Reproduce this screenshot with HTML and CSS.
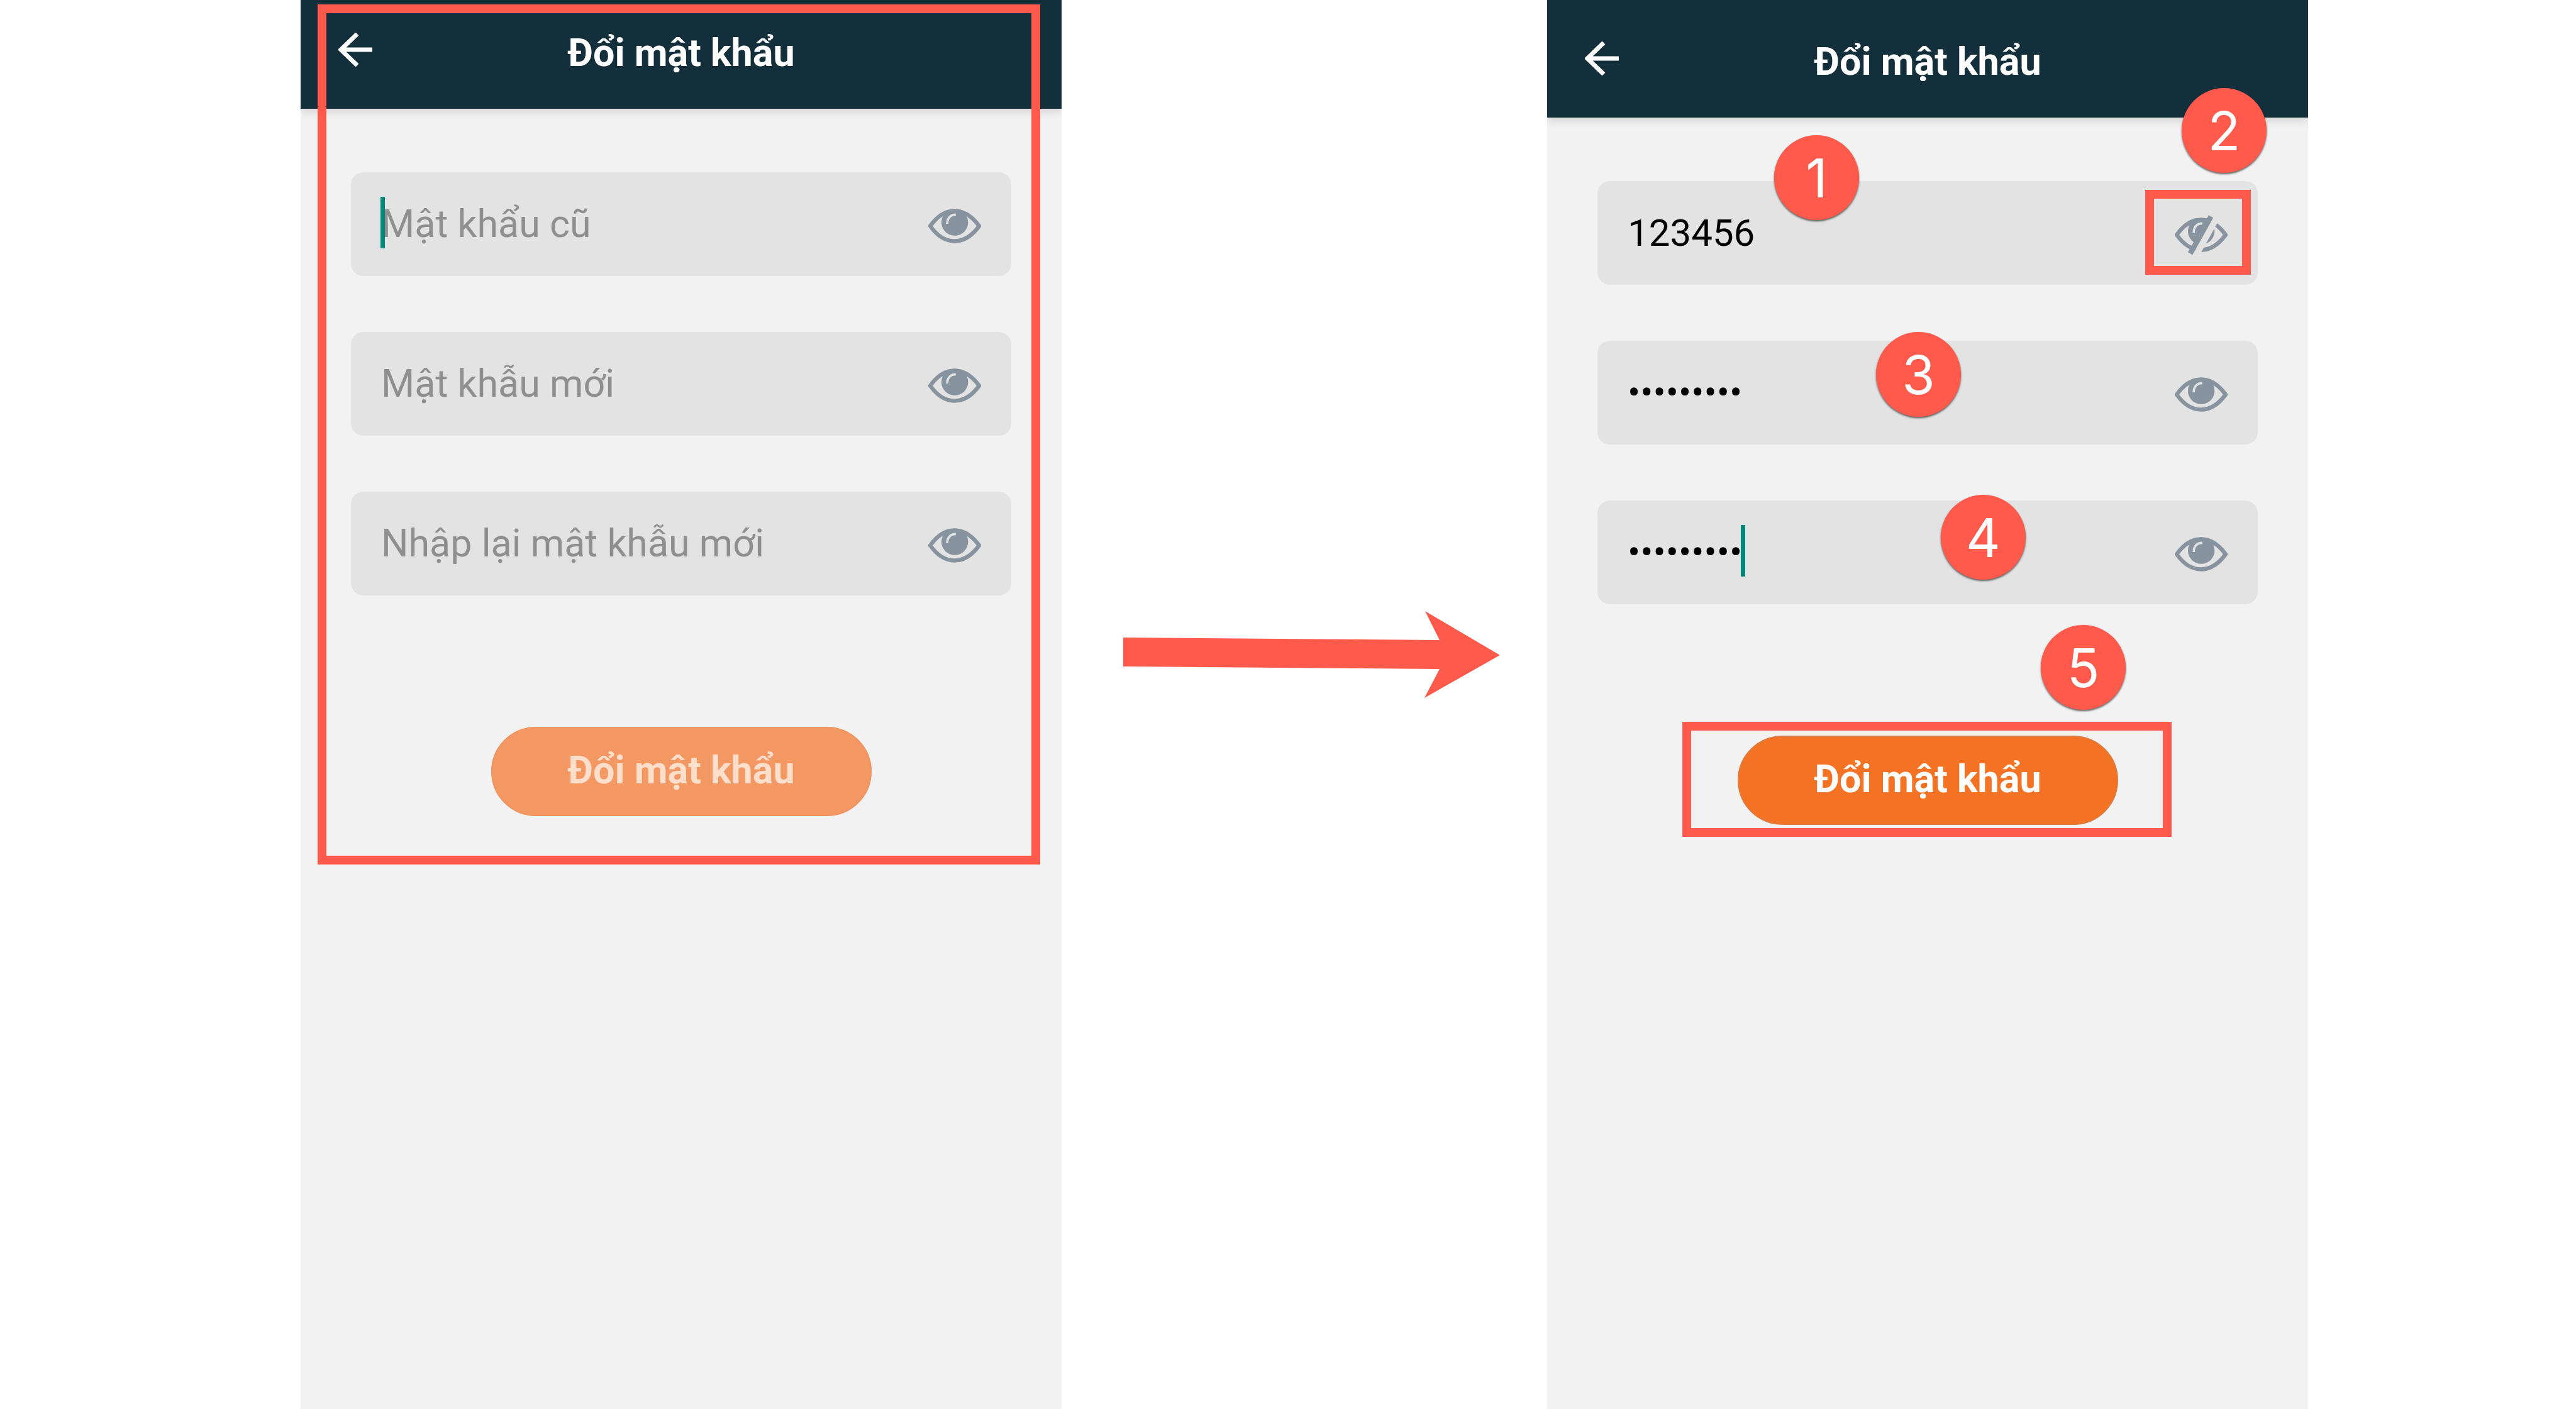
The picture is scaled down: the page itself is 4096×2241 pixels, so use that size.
FILE: index.html
```html
<!DOCTYPE html>
<html lang="vi">
<head>
<meta charset="utf-8">
<meta name="viewport" content="width=device-width, initial-scale=1">
<title>Đổi mật khẩu</title>
<link rel="stylesheet" href="styles.css">
</head>
<body>
<svg class="sprite" width="0" height="0" aria-hidden="true">
  <symbol id="back" viewBox="0 0 54 54">
    <path d="M30 2 4 27l26 25M4 27h50" fill="none" stroke="currentColor" stroke-width="7"/>
  </symbol>
  <symbol id="eye" viewBox="0 0 301 226">
    <path d="M11 113C50 58 96 27 150 27s100 31 140 86c-40 55-86 86-140 86S50 168 11 113Z" fill="none" stroke="currentColor" stroke-width="23" stroke-linejoin="round"/>
    <circle cx="151" cy="92" r="76" fill="currentColor"/>
    <path class="glint" d="M157 48c-30 0-49 20-49 52" fill="none" stroke-width="13"/>
  </symbol>
  <symbol id="eye-off" viewBox="0 0 301 226">
    <path d="M11 113C50 58 96 27 150 27s100 31 140 86c-40 55-86 86-140 86S50 168 11 113Z" fill="none" stroke="currentColor" stroke-width="23" stroke-linejoin="round"/>
    <circle cx="151" cy="92" r="76" fill="currentColor"/>
    <path class="glint" d="M157 48c-30 0-49 20-49 52" fill="none" stroke-width="13"/>
    <path class="glint" d="M254-12 116 238" fill="none" stroke-width="36"/>
    <path d="M206 8 88 220" fill="none" stroke="currentColor" stroke-width="30"/>
  </symbol>
</svg>

<main class="guide">
  <section class="phone phone-before">
    <header class="bar">
      <a class="back" href="#" aria-label="Quay lại"><svg><use href="#back"/></svg></a>
      <h1 class="title">Đổi mật khẩu</h1>
    </header>
    <form class="form">
      <div class="field">
        <input class="input" type="password" placeholder="Mật khẩu cũ" aria-label="Mật khẩu cũ">
        <span class="caret"></span>
        <button class="toggle" type="button" aria-label="Hiện mật khẩu"><svg><use href="#eye"/></svg></button>
      </div>
      <div class="field">
        <input class="input" type="password" placeholder="Mật khẫu mới" aria-label="Mật khẫu mới">
        <button class="toggle" type="button" aria-label="Hiện mật khẩu"><svg><use href="#eye"/></svg></button>
      </div>
      <div class="field">
        <input class="input" type="password" placeholder="Nhập lại mật khẫu mới" aria-label="Nhập lại mật khẫu mới">
        <button class="toggle" type="button" aria-label="Hiện mật khẩu"><svg><use href="#eye"/></svg></button>
      </div>
      <button class="submit" type="button" disabled>Đổi mật khẩu</button>
    </form>
    <div class="frame frame-screen"></div>
  </section>

  <div class="next">
    <svg class="arrow" viewBox="0 0 599 138" aria-hidden="true">
      <path d="M0 42 503 46 480 0 599 70 479 138 503 92 0 88Z" fill="currentColor"/>
    </svg>
  </div>

  <section class="phone phone-after">
    <header class="bar">
      <a class="back" href="#" aria-label="Quay lại"><svg><use href="#back"/></svg></a>
      <h2 class="title">Đổi mật khẩu</h2>
    </header>
    <form class="form">
      <div class="field">
        <input class="input" type="text" value="123456" aria-label="Mật khẩu cũ">
        <button class="toggle" type="button" aria-label="Ẩn mật khẩu"><svg><use href="#eye-off"/></svg></button>
      </div>
      <div class="field">
        <input class="input" type="password" value="123456789" aria-label="Mật khẫu mới">
        <button class="toggle" type="button" aria-label="Hiện mật khẩu"><svg><use href="#eye"/></svg></button>
      </div>
      <div class="field">
        <input class="input" type="password" value="123456789" aria-label="Nhập lại mật khẫu mới">
        <span class="caret caret-end"></span>
        <button class="toggle" type="button" aria-label="Hiện mật khẩu"><svg><use href="#eye"/></svg></button>
      </div>
      <button class="submit" type="button">Đổi mật khẩu</button>
    </form>
    <div class="frame frame-toggle"></div>
    <div class="frame frame-submit"></div>
    <span class="badge badge-1">1</span>
    <span class="badge badge-2">2</span>
    <span class="badge badge-3">3</span>
    <span class="badge badge-4">4</span>
    <span class="badge badge-5">5</span>
  </section>
</main>
</body>
</html>
```
FILE: styles.css
```css
:root {
  --red: #ff5a4b;
  --field: #e3e3e3;
}

* {
  box-sizing: border-box;
}

body {
  margin: 0;
  background: #fff;
  font-family: Roboto, "Liberation Sans", sans-serif;
  font-size: 60px;
  line-height: 70px;
}

.sprite {
  position: absolute;
}

/* Two screens side by side with the arrow between them */
.guide {
  display: grid;
  grid-template-columns: 1210fr 772fr 1210fr;
  min-height: 100vh;
  padding-left: calc(100% * 478 / 4096);
  padding-right: calc(100% * 426 / 4096);
}

.phone {
  position: relative;
  background: #f2f2f2;
}

.bar {
  display: grid;
  grid-template-columns: 54px 1fr 54px;
  align-items: center;
  padding: 49px 60px 54px;
  background: #122f3b;
  color: #fff;
  box-shadow: 0 4px 14px rgba(0, 0, 0, 0.14);
  clip-path: inset(0 0 -24px 0);
}

.phone-after .bar {
  padding-top: 63px;
}

.back {
  display: block;
  height: 54px;
  margin-bottom: 10px;
  color: inherit;
}

.back svg {
  display: block;
  width: 54px;
  height: 54px;
}

.title {
  margin: 0;
  font-size: 61px;
  font-weight: 700;
  text-align: center;
}

.form {
  display: flex;
  flex-direction: column;
  gap: 89px;
  padding: 101px 80px;
}

.field {
  position: relative;
  display: flex;
  align-items: center;
  height: 165px;
  padding: 0 48px;
  border-radius: 20px;
  background: var(--field);
}

.input {
  flex: 1;
  min-width: 0;
  height: 100%;
  padding: 0;
  border: 0;
  outline: 0;
  background: none;
  color: #000;
  font: inherit;
}

.input::placeholder {
  color: #8f8f8f;
  font-size: 61px;
  opacity: 1;
}

.caret {
  position: absolute;
  top: 39px;
  left: 47px;
  width: 7px;
  height: 82px;
  background: #00897b;
}

.caret-end {
  left: 228px;
}

.toggle {
  margin: 6px 0 0;
  padding: 0;
  border: 0;
  background: none;
  color: #87939f;
}

.toggle svg {
  display: block;
  width: 84px;
  height: 63px;
}

.glint {
  stroke: var(--field);
}

.submit {
  align-self: center;
  width: calc(50% + 80px);
  height: 142px;
  margin-top: 120px;
  padding: 0 0 4px;
  border: 2px solid #e07a3c;
  border-radius: 71px;
  background: #f47224;
  color: #fff;
  font: inherit;
  font-size: 61px;
  font-weight: 700;
}

.submit:disabled {
  border-color: #f0935e;
  background: #f49863;
  color: #ffdfcc;
}

.next {
  display: flex;
  align-items: center;
  padding: 0 75px 160px 98px;
  color: var(--red);
}

.arrow {
  width: 100%;
}

/* Call-outs laid over the screens */
.frame {
  position: absolute;
  border: 14px solid var(--red);
  pointer-events: none;
}

.frame-screen {
  top: 7px;
  left: 27px;
  right: 34px;
  height: 1368px;
}

.frame-toggle {
  top: 302px;
  right: 91px;
  width: 168px;
  height: 135px;
}

.frame-submit {
  top: 1148px;
  left: 215px;
  right: 217px;
  height: 183px;
}

.badge {
  position: absolute;
  width: 135px;
  height: 135px;
  padding-top: 4px;
  border-radius: 50%;
  background: var(--red);
  box-shadow: 0 2px 3px rgba(0, 0, 0, 0.6);
  color: #fff;
  font-family: Inter, "Liberation Sans", sans-serif;
  font-size: 85px;
  line-height: 130px;
  text-align: center;
}

.badge-1 {
  top: 215px;
  left: 361px;
}

.badge-2 {
  top: 140px;
  left: 1009px;
}

.badge-3 {
  top: 528px;
  left: 523px;
}

.badge-4 {
  top: 787px;
  left: 626px;
}

.badge-5 {
  top: 994px;
  left: 785px;
}
```
